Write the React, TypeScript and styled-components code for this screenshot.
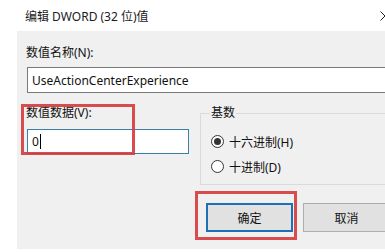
import styled, { createGlobalStyle } from "styled-components"

const Global = createGlobalStyle`
    html, body {
        margin: 0;
        padding: 0;
        background: #fff;
    }
    body {
        font-family: "Noto Sans", "Noto Sans CJK SC", sans-serif;
        font-size: 12px;
        color: #111;
    }
`

function App() {
    return (
        <>
            <Global />
            <Screen>
                <Dialog>
                    <TitleBar>
                        <span>编辑 DWORD (32 位)值</span>
                        <svg width="10" height="10" viewBox="0 0 10 10">
                            <path d="M0.5 0.5 L9.5 9.5 M9.5 0.5 L0.5 9.5" stroke="#222" strokeWidth="1" />
                        </svg>
                    </TitleBar>
                    <Panel>
                        <Label>数值名称(N):</Label>
                        <TextBox>UseActionCenterExperience</TextBox>
                        <Row>
                            <Column>
                                <Label>数值数据(V):</Label>
                                <TextBox $focused>
                                    0<Caret />
                                </TextBox>
                            </Column>
                            <Group>
                                <Legend>基数</Legend>
                                <RadioRow>
                                    <Radio $checked />
                                    十六进制(H)
                                </RadioRow>
                                <RadioRow>
                                    <Radio />
                                    十进制(D)
                                </RadioRow>
                            </Group>
                        </Row>
                        <Buttons>
                            <Button $primary>确定</Button>
                            <Button>取消</Button>
                        </Buttons>
                    </Panel>
                </Dialog>
                <Mark style={{ left: 21, top: 104, width: 114, height: 51 }} />
                <Mark style={{ left: 195, top: 191, width: 102, height: 49 }} />
            </Screen>
        </>
    )
}

const Screen = styled.div`
    position: relative;
    width: 385px;
    height: 252px;
    overflow: hidden;
    background: #fff;
`

const Dialog = styled.div`
    width: 401px;
    display: flex;
    flex-direction: column;
`

const TitleBar = styled.div`
    height: 31px;
    padding: 0 11px 0 25px;
    display: flex;
    align-items: center;
    justify-content: space-between;
    font-size: 12px;
    color: #1a1a1a;
`

const Panel = styled.div`
    margin-left: 17px;
    width: 384px;
    height: 218px;
    box-sizing: border-box;
    padding: 14px 11px 0 10px;
    background: #f0f0f0;
    display: flex;
    flex-direction: column;
`

const Label = styled.div`
    line-height: 16px;
    height: 16px;
    margin-left: -1px;
    white-space: nowrap;
`

const TextBox = styled.div<{ $focused?: boolean }>`
    margin-top: ${p => (p.$focused ? 8 : 6)}px;
    height: ${p => (p.$focused ? 25 : 26)}px;
    box-sizing: border-box;
    border: 1px solid ${p => (p.$focused ? "#3a7fa8" : "#7a7a7a")};
    background: #fff;
    padding: 0 4px;
    display: flex;
    align-items: center;
    white-space: nowrap;
    overflow: hidden;
`

const Caret = styled.span`
    display: inline-block;
    width: 0;
    height: 15px;
    border-left: 1px solid #000;
    margin-left: 1px;
`

const Row = styled.div`
    margin-top: 12px;
    display: flex;
    align-items: flex-start;
    gap: 11px;
`

const Column = styled.div`
    width: 162px;
    display: flex;
    flex-direction: column;
`

const Group = styled.fieldset`
    flex: 1;
    margin: 0;
    border: 1px solid #dadada;
    padding: 8px 0 5px 10px;
    display: flex;
    flex-direction: column;
`

const Legend = styled.legend`
    padding: 0 1px;
    margin-left: -1px;
    line-height: 16px;
`

const RadioRow = styled.div`
    height: 25px;
    flex: none;
    display: flex;
    align-items: center;
    gap: 5px;
    white-space: nowrap;
`

const Radio = styled.span<{ $checked?: boolean }>`
    width: 13px;
    height: 13px;
    box-sizing: border-box;
    border-radius: 50%;
    border: 1px solid #333;
    background: #fff;
    display: flex;
    align-items: center;
    justify-content: center;

    &::after {
        content: "";
        width: 7px;
        height: 7px;
        border-radius: 50%;
        background: ${p => (p.$checked ? "#333" : "transparent")};
    }
`

const Buttons = styled.div`
    margin-top: 18px;
    display: flex;
    justify-content: flex-end;
    gap: 10px;
`

const Button = styled.div<{ $primary?: boolean }>`
    width: 87px;
    height: 29px;
    box-sizing: border-box;
    background: #e1e1e1;
    border: ${p => (p.$primary ? "2px solid #1d6fb8" : "1px solid #adadad")};
    display: flex;
    align-items: center;
    justify-content: center;
`

const Mark = styled.div`
    position: absolute;
    box-sizing: border-box;
    border: 3px solid rgba(214, 58, 60, 0.9);
`

export default App
